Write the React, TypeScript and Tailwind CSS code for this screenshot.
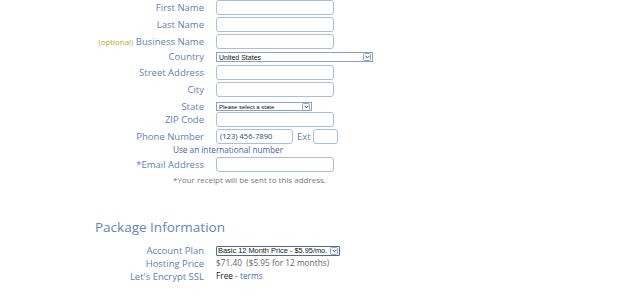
import React from "react";

const labelCls = "w-[204px] shrink-0 text-right text-[9.5px] leading-none text-[#6180b8] whitespace-nowrap";
const inputCls = "ml-[12px] h-[15px] w-[118px] rounded-[3px] border border-[#a9bfe2] bg-white";

function Arrow() {
  return (
    <div className="ml-auto mr-[1px] flex h-[8px] w-[8px] shrink-0 items-center justify-center rounded-[1.5px] border border-[#9aa7b8] bg-[#f4f6f9]">
      <svg width="5" height="4" viewBox="0 0 5 4">
        <path d="M0.6 0.8 L2.5 2.9 L4.4 0.8" fill="none" stroke="#4a5568" strokeWidth="0.9" />
      </svg>
    </div>
  );
}

function Row({ label, children, className = "" }: { label: React.ReactNode; children?: React.ReactNode; className?: string }) {
  return (
    <div className={`flex items-center ${className}`}>
      <div className={labelCls}>{label}</div>
      {children}
    </div>
  );
}

export default function App() {
  return (
    <div className="w-[640px] h-[306px] overflow-hidden bg-white font-['Open_Sans',sans-serif]">
      <Row label="First Name">
        <div className={inputCls} />
      </Row>
      <Row label="Last Name" className="mt-[2px]">
        <div className={inputCls} />
      </Row>
      <Row
        className="mt-[2px]"
        label={
          <>
            <span className="text-[7.9px] text-[#aeb02c]">(optional)</span> Business Name
          </>
        }
      >
        <div className={inputCls} />
      </Row>
      <Row label="Country" className="mt-[3px] h-[10px]">
        <div className="ml-[12px] flex h-[10px] w-[157px] items-center overflow-hidden border border-[#8aa2c6] bg-white">
          <span className="pl-[2px] whitespace-nowrap font-['Liberation_Sans',sans-serif] text-[7px] leading-none text-[#111]">United States</span>
          <Arrow />
        </div>
      </Row>
      <Row label="Street Address" className="mt-[3px]">
        <div className={inputCls} />
      </Row>
      <Row label="City" className="mt-[2px]">
        <div className={inputCls} />
      </Row>
      <Row label="State" className="mt-[5px] h-[9px]">
        <div className="ml-[12px] flex h-[9px] w-[96px] items-center overflow-hidden border border-[#8aa2c6] bg-white">
          <span className="pl-[2px] whitespace-nowrap font-['Liberation_Sans',sans-serif] text-[6px] leading-none text-[#111]">Please select a state</span>
          <Arrow />
        </div>
      </Row>
      <Row label="ZIP Code" className="mt-[1px]">
        <div className={inputCls} />
      </Row>
      <Row label="Phone Number" className="mt-[2px]">
        <div className="ml-[12px] flex h-[15px] w-[77px] items-center rounded-[3px] border border-[#a9bfe2] bg-white pl-[3px] text-[7.6px] leading-none text-[#2d4575]">
          (123) 456-7890
        </div>
        <span className="ml-[4px] text-[9.5px] leading-none text-[#6180b8]">Ext</span>
        <div className="ml-[2px] h-[15px] w-[25px] rounded-[3px] border border-[#a9bfe2] bg-white" />
      </Row>
      <div className="mt-[1px] h-[10px] pl-[173px] text-[8.2px] leading-[10px] text-[#3f63a6]">Use an international number</div>
      <Row label="*Email Address" className="mt-[2px]">
        <div className={inputCls} />
      </Row>
      <div className="mt-[3px] h-[10px] pl-[173px] text-[8px] leading-[10px] text-[#777]">*Your receipt will be sent to this address.</div>

      <div className="mt-[32px] h-[20px] pl-[95px] text-[13.5px] leading-[20px] text-[#5f85c4]">Package Information</div>

      <div className="mt-[7px]">
        <Row label="Account Plan" className="h-[13px]">
          <div className="ml-[12px] flex h-[10px] w-[124px] items-center overflow-hidden rounded-[1px] border border-[#4d6c9c] bg-white">
            <span className="pl-[1px] whitespace-nowrap font-['Liberation_Sans',sans-serif] text-[7.4px] leading-none text-[#111]">Basic 12 Month Price - $5.95/mo.</span>
            <Arrow />
          </div>
        </Row>
        <Row label="Hosting Price" className="h-[13px]">
          <span className="ml-[12px] text-[8.3px] leading-none text-[#666] whitespace-pre">$71.40  ($5.95 for 12 months)</span>
        </Row>
        <Row label="Let's Encrypt SSL" className="h-[13px]">
          <span className="ml-[12px] text-[8.3px] leading-none whitespace-pre">
            <span className="text-[#222]">Free</span>
            <span className="text-[#666]"> - </span>
            <span className="text-[#3b6fb3]">terms</span>
          </span>
        </Row>
      </div>
    </div>
  );
}
